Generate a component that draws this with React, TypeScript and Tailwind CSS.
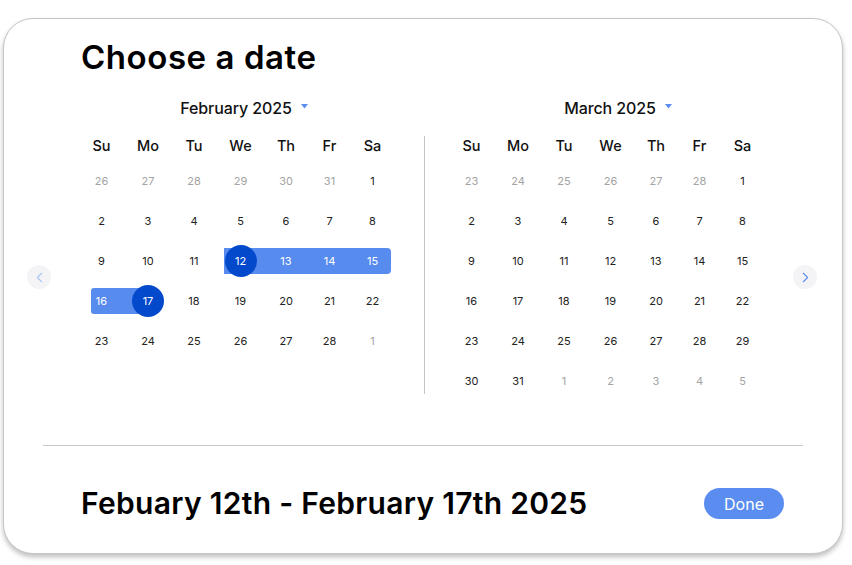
import { ChevronLeft, ChevronRight } from 'lucide-react';

const colStart = ['col-start-1', 'col-start-2', 'col-start-3', 'col-start-4', 'col-start-5', 'col-start-6', 'col-start-7'];
const days = ['Su', 'Mo', 'Tu', 'We', 'Th', 'Fr', 'Sa'];
const cols = 'grid grid-cols-[47px_46px_46px_47px_44px_43px_43px]';

type Day = { n: number; muted?: boolean; selected?: boolean; inRange?: boolean };

const feb: Day[][] = [
  [{ n: 26, muted: true }, { n: 27, muted: true }, { n: 28, muted: true }, { n: 29, muted: true }, { n: 30, muted: true }, { n: 31, muted: true }, { n: 1 }],
  [{ n: 2 }, { n: 3 }, { n: 4 }, { n: 5 }, { n: 6 }, { n: 7 }, { n: 8 }],
  [{ n: 9 }, { n: 10 }, { n: 11 }, { n: 12, selected: true }, { n: 13, inRange: true }, { n: 14, inRange: true }, { n: 15, inRange: true }],
  [{ n: 16, inRange: true }, { n: 17, selected: true }, { n: 18 }, { n: 19 }, { n: 20 }, { n: 21 }, { n: 22 }],
  [{ n: 23 }, { n: 24 }, { n: 25 }, { n: 26 }, { n: 27 }, { n: 28 }, { n: 1, muted: true }],
];

const mar: Day[][] = [
  [{ n: 23, muted: true }, { n: 24, muted: true }, { n: 25, muted: true }, { n: 26, muted: true }, { n: 27, muted: true }, { n: 28, muted: true }, { n: 1 }],
  [{ n: 2 }, { n: 3 }, { n: 4 }, { n: 5 }, { n: 6 }, { n: 7 }, { n: 8 }],
  [{ n: 9 }, { n: 10 }, { n: 11 }, { n: 12 }, { n: 13 }, { n: 14 }, { n: 15 }],
  [{ n: 16 }, { n: 17 }, { n: 18 }, { n: 19 }, { n: 20 }, { n: 21 }, { n: 22 }],
  [{ n: 23 }, { n: 24 }, { n: 25 }, { n: 26 }, { n: 27 }, { n: 28 }, { n: 29 }],
  [{ n: 30 }, { n: 31 }, { n: 1, muted: true }, { n: 2, muted: true }, { n: 3, muted: true }, { n: 4, muted: true }, { n: 5, muted: true }],
];

// range bars per row index (february only)
const febBars: Record<number, string> = {
  2: 'col-start-4 col-end-8 ml-[7px] mr-[3px] rounded-r-[4px]',
  3: 'col-start-1 col-end-3 ml-[13px] mr-[23px] rounded-l-[3px]',
};

const Caret = () => (
  <svg width="7" height="5" viewBox="0 0 7 5" className="ml-[9px] mt-[-4px]">
    <path d="M0 0h7L3.5 4.5z" fill="#5b8def" />
  </svg>
);

const Month = ({ title, weeks, bars = {}, labelPad }: { title: string; weeks: Day[][]; bars?: Record<number, string>; labelPad: string }) => (
  <div className="flex flex-col w-[316px]">
    <div className={`h-[24px] flex items-center justify-center ${labelPad} text-[16px] font-medium text-[#111] tracking-[-0.1px]`}>
      {title}
      <Caret />
    </div>
    <div className={`${cols} h-[31px] mt-[10px] items-center text-[14.5px] font-medium text-[#111]`}>
      {days.map((d) => (
        <div key={d} className="text-center">{d}</div>
      ))}
    </div>
    {weeks.map((week, wi) => (
      <div key={wi} className={`${cols} h-[40px] items-center`}>
        {bars[wi] && <div className={`row-start-1 h-[26px] bg-[#588bee] ${bars[wi]}`} />}
        {week.map((d, di) => (
          <div key={di} className={`row-start-1 ${colStart[di]} flex justify-center items-center`}>
            {d.selected ? (
              <div className="w-[32px] h-[32px] rounded-full bg-[#0349cc] text-white text-[11px] flex items-center justify-center">
                {d.n}
              </div>
            ) : (
              <span className={`text-[11px] ${d.muted ? 'text-[#a3a3a3]' : d.inRange ? 'text-white' : 'text-[#222]'}`}>{d.n}</span>
            )}
          </div>
        ))}
      </div>
    ))}
  </div>
);

export default function App() {
  return (
    <div className="w-[852px] h-[565px] bg-white pt-[18px] pl-[3px]" style={{ fontFamily: 'Inter, "Noto Sans", sans-serif' }}>
      <div className="w-[840px] h-[536px] rounded-[30px] border border-[#c6c6c6] bg-white shadow-[0_3px_5px_rgba(0,0,0,0.25)] flex flex-col">
        <h1 className="mt-[18px] ml-[77px] text-[33px] leading-[40px] font-semibold text-black tracking-[0.55px]">Choose a date</h1>

        <div className="mt-[19px] flex items-start">
          <button className="ml-[23px] mt-[169px] w-[24px] h-[24px] rounded-full bg-[#f4f4f6] flex items-center justify-center">
            <ChevronLeft size={17} strokeWidth={1.5} color="#a8c4f6" />
          </button>
          <div className="ml-[27px]">
            <Month title="February 2025" weeks={feb} bars={febBars} labelPad="pl-[16px]" />
          </div>
          <div className="ml-[30px] mt-[40px] w-px h-[258px] bg-[#c4c4c4]" />
          <div className="ml-[23px]">
            <Month title="March 2025" weeks={mar} labelPad="pl-[24px]" />
          </div>
          <button className="ml-[29px] mt-[169px] w-[24px] h-[24px] rounded-full bg-[#f4f4f6] flex items-center justify-center">
            <ChevronRight size={17} strokeWidth={1.5} color="#5b8def" />
          </button>
        </div>

        <div className="mt-[44px] mx-[39px] h-px bg-[#c9c9c9]" />

        <div className="mt-[37px] flex items-center justify-between pl-[77px] pr-[58px]">
          <div className="text-[30px] leading-[40px] font-semibold text-black tracking-[0.3px]">Febuary 12th - February 17th 2025</div>
          <button className="w-[80px] h-[31px] mt-[1px] rounded-full bg-[#5a8def] text-white text-[16px] flex items-center justify-center">Done</button>
        </div>
      </div>
    </div>
  );
}
